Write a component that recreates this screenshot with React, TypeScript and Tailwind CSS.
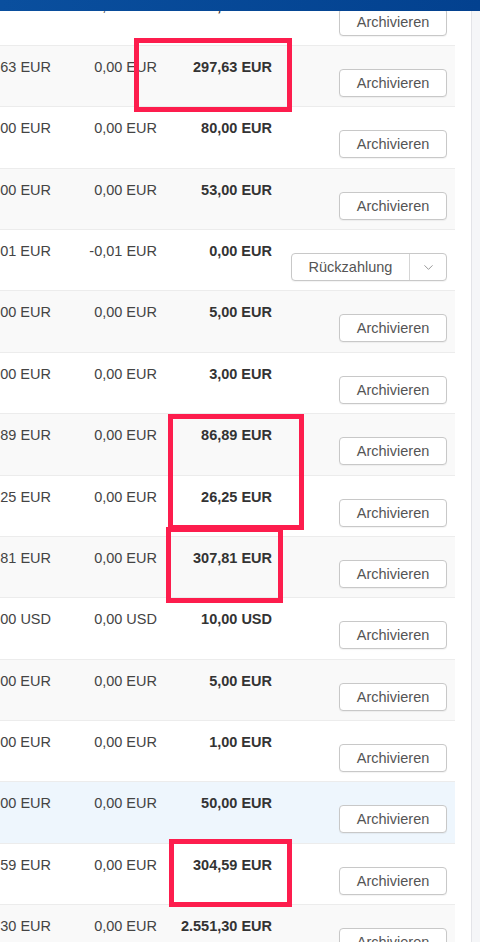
import { ChevronDown } from "lucide-react";

interface Row {
  id: number;
  amount: string;
  paid: string;
  open: string;
  tone: "white" | "gray" | "blue";
  refund?: boolean;
}

const rows: Row[] = [
  { id: 0, amount: "120,00 EUR", paid: "0,00 EUR", open: "120,00 EUR", tone: "white" },
  { id: 1, amount: "297,63 EUR", paid: "0,00 EUR", open: "297,63 EUR", tone: "gray" },
  { id: 2, amount: "80,00 EUR", paid: "0,00 EUR", open: "80,00 EUR", tone: "white" },
  { id: 3, amount: "53,00 EUR", paid: "0,00 EUR", open: "53,00 EUR", tone: "gray" },
  { id: 4, amount: "0,01 EUR", paid: "-0,01 EUR", open: "0,00 EUR", tone: "white", refund: true },
  { id: 5, amount: "5,00 EUR", paid: "0,00 EUR", open: "5,00 EUR", tone: "gray" },
  { id: 6, amount: "3,00 EUR", paid: "0,00 EUR", open: "3,00 EUR", tone: "white" },
  { id: 7, amount: "86,89 EUR", paid: "0,00 EUR", open: "86,89 EUR", tone: "gray" },
  { id: 8, amount: "26,25 EUR", paid: "0,00 EUR", open: "26,25 EUR", tone: "white" },
  { id: 9, amount: "307,81 EUR", paid: "0,00 EUR", open: "307,81 EUR", tone: "gray" },
  { id: 10, amount: "10,00 USD", paid: "0,00 USD", open: "10,00 USD", tone: "white" },
  { id: 11, amount: "5,00 EUR", paid: "0,00 EUR", open: "5,00 EUR", tone: "gray" },
  { id: 12, amount: "1,00 EUR", paid: "0,00 EUR", open: "1,00 EUR", tone: "white" },
  { id: 13, amount: "50,00 EUR", paid: "0,00 EUR", open: "50,00 EUR", tone: "blue" },
  { id: 14, amount: "304,59 EUR", paid: "0,00 EUR", open: "304,59 EUR", tone: "white" },
  { id: 15, amount: "2.551,30 EUR", paid: "0,00 EUR", open: "2.551,30 EUR", tone: "gray" },
];

const toneClass = {
  white: "bg-white",
  gray: "bg-[#f9f9f9]",
  blue: "bg-[#eef6fd]",
};

// annotation boxes drawn over the table
const marks = [
  "left-[134px] top-[38px] w-[158px] h-[74px]",
  "left-[168px] top-[414px] w-[136px] h-[116px]",
  "left-[166px] top-[527px] w-[117px] h-[76px]",
  "left-[169px] top-[839px] w-[123px] h-[68px]",
];

const ArchiveButton = () => (
  <button
    type="button"
    className="h-[28px] w-[108px] rounded-[4px] border border-[#c8c8c8] bg-white text-[14.5px] text-[#555] shadow-[0_1px_1px_rgba(0,0,0,0.05)]"
  >
    Archivieren
  </button>
);

const RefundButton = () => (
  <div className="flex h-[28px] w-[156px] rounded-[4px] border border-[#c8c8c8] bg-white text-[14.5px] text-[#555] shadow-[0_1px_1px_rgba(0,0,0,0.05)]">
    <button type="button" className="w-[118px] border-r border-[#d5d5d5]">
      Rückzahlung
    </button>
    <button type="button" className="flex flex-1 items-center justify-center">
      <ChevronDown size={15} strokeWidth={1.2} color="#777" />
    </button>
  </div>
);

export default function App() {
  return (
    <div
      className="relative h-[942px] w-[480px] overflow-hidden bg-white text-[14.5px] leading-[20px] text-[#444]"
      style={{ fontFamily: '"Liberation Sans", Arial, sans-serif' }}
    >
      <div className="flex h-full">
        <div className="mt-[-16.36px] w-[455px] shrink-0">
          {rows.map((row) => (
            <div
              key={row.id}
              className={`flex h-[61.36px] border-t border-[#ececec] ${toneClass[row.tone]}`}
            >
              <div className="flex w-[51px] shrink-0 justify-end whitespace-nowrap pt-[11px]">
                {row.amount}
              </div>
              <div className="flex w-[106px] shrink-0 justify-end whitespace-nowrap pt-[11px]">
                {row.paid}
              </div>
              <div className="flex w-[115px] shrink-0 justify-end whitespace-nowrap pt-[11px] font-bold text-[#333]">
                {row.open}
              </div>
              <div className="flex flex-1 justify-end pr-[8px] pt-[23px]">
                {row.refund ? <RefundButton /> : <ArchiveButton />}
              </div>
            </div>
          ))}
        </div>
        <div className="w-[16px] shrink-0 bg-white" />
        <div className="flex-1 border-l border-[#e3e4e8] bg-[#f5f6f8]" />
      </div>

      <div className="absolute left-0 right-0 top-0 h-[11px] bg-gradient-to-r from-[#0a4f9e] to-[#03418f]" />

      {marks.map((m) => (
        <div key={m} className={`absolute border-[5px] border-[#fd1d4d] ${m}`} />
      ))}
    </div>
  );
}
